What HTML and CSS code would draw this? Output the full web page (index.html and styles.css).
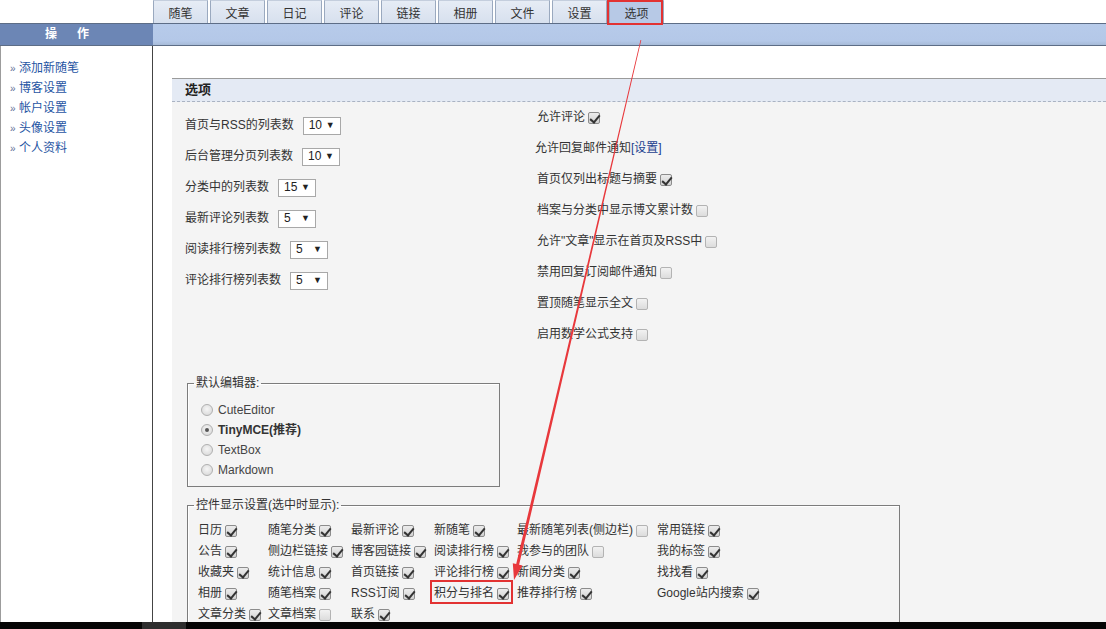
FILE: index.html
```html
<!DOCTYPE html>
<html lang="zh-CN">
<head>
<meta charset="utf-8">
<title>选项</title>
<link rel="stylesheet" href="styles.css">
</head>
<body>
<div class="page">
  <div class="top">
    <nav class="tabs">
      <span class="tab">随笔</span>
      <span class="tab">文章</span>
      <span class="tab">日记</span>
      <span class="tab">评论</span>
      <span class="tab">链接</span>
      <span class="tab">相册</span>
      <span class="tab">文件</span>
      <span class="tab">设置</span>
      <span class="tab active">选项</span>
    </nav>
  </div>
  <div class="bar">
    <div class="bar-left"><span>操</span><span>作</span></div>
    <div class="bar-right"></div>
  </div>
  <div class="body">
    <aside class="side">
      <ul class="side-list">
        <li><span class="raquo">»</span> <a>添加新随笔</a></li>
        <li><span class="raquo">»</span> <a>博客设置</a></li>
        <li><span class="raquo">»</span> <a>帐户设置</a></li>
        <li><span class="raquo">»</span> <a>头像设置</a></li>
        <li><span class="raquo">»</span> <a>个人资料</a></li>
      </ul>
    </aside>
    <main class="main">
      <section class="panel">
        <h2 class="panel-title">选项</h2>
        <div class="panel-body">
          <div class="cols">
            <div class="col-left">
              <div class="row"><span>首页与RSS的列表数</span><span class="sel"><span>10</span><span class="arr">▼</span></span></div>
              <div class="row"><span>后台管理分页列表数</span><span class="sel"><span>10</span><span class="arr">▼</span></span></div>
              <div class="row"><span>分类中的列表数</span><span class="sel"><span>15</span><span class="arr">▼</span></span></div>
              <div class="row"><span>最新评论列表数</span><span class="sel"><span>5</span><span class="arr">▼</span></span></div>
              <div class="row"><span>阅读排行榜列表数</span><span class="sel"><span>5</span><span class="arr">▼</span></span></div>
              <div class="row"><span>评论排行榜列表数</span><span class="sel"><span>5</span><span class="arr">▼</span></span></div>
            </div>
            <div class="col-right">
              <div class="rrow"><span>允许评论</span><span class="cb on"></span></div>
              <div class="rrow shift"><span>允许回复邮件通知<a class="link">[设置]</a></span></div>
              <div class="rrow"><span>首页仅列出标题与摘要</span><span class="cb on"></span></div>
              <div class="rrow"><span>档案与分类中显示博文累计数</span><span class="cb"></span></div>
              <div class="rrow"><span>允许"文章"显示在首页及RSS中</span><span class="cb"></span></div>
              <div class="rrow"><span>禁用回复订阅邮件通知</span><span class="cb"></span></div>
              <div class="rrow"><span>置顶随笔显示全文</span><span class="cb"></span></div>
              <div class="rrow"><span>启用数学公式支持</span><span class="cb"></span></div>
            </div>
          </div>

          <fieldset class="editor">
            <legend>默认编辑器:</legend>
            <div class="radio-row"><span class="rb"></span><span>CuteEditor</span></div>
            <div class="radio-row"><span class="rb on"></span><b>TinyMCE(推荐)</b></div>
            <div class="radio-row"><span class="rb"></span><span>TextBox</span></div>
            <div class="radio-row"><span class="rb"></span><span>Markdown</span></div>
          </fieldset>

          <fieldset class="widgets">
            <legend>控件显示设置(选中时显示):</legend>
            <div class="wgrid">
              <div class="w"><span>日历</span><span class="cb on"></span></div>
              <div class="w"><span>随笔分类</span><span class="cb on"></span></div>
              <div class="w"><span>最新评论</span><span class="cb on"></span></div>
              <div class="w"><span>新随笔</span><span class="cb on"></span></div>
              <div class="w"><span>最新随笔列表(侧边栏)</span><span class="cb"></span></div>
              <div class="w"><span>常用链接</span><span class="cb on"></span></div>

              <div class="w"><span>公告</span><span class="cb on"></span></div>
              <div class="w"><span>侧边栏链接</span><span class="cb on"></span></div>
              <div class="w"><span>博客园链接</span><span class="cb on"></span></div>
              <div class="w"><span>阅读排行榜</span><span class="cb on"></span></div>
              <div class="w"><span>我参与的团队</span><span class="cb"></span></div>
              <div class="w"><span>我的标签</span><span class="cb on"></span></div>

              <div class="w"><span>收藏夹</span><span class="cb on"></span></div>
              <div class="w"><span>统计信息</span><span class="cb on"></span></div>
              <div class="w"><span>首页链接</span><span class="cb on"></span></div>
              <div class="w"><span>评论排行榜</span><span class="cb on"></span></div>
              <div class="w"><span>新闻分类</span><span class="cb on"></span></div>
              <div class="w"><span>找找看</span><span class="cb on"></span></div>

              <div class="w"><span>相册</span><span class="cb on"></span></div>
              <div class="w"><span>随笔档案</span><span class="cb on"></span></div>
              <div class="w"><span>RSS订阅</span><span class="cb on"></span></div>
              <div class="w"><span>积分与排名</span><span class="cb on"></span></div>
              <div class="w"><span>推荐排行榜</span><span class="cb on"></span></div>
              <div class="w"><span>Google站内搜索</span><span class="cb on"></span></div>

              <div class="w"><span>文章分类</span><span class="cb on"></span></div>
              <div class="w"><span>文章档案</span><span class="cb"></span></div>
              <div class="w"><span>联系</span><span class="cb on"></span></div>
            </div>
          </fieldset>
        </div>
      </section>
    </main>
  </div>
  <div class="taskbar"><span class="task"></span></div>

  <svg class="annot" width="1106" height="629" viewBox="0 0 1106 629">
    <rect x="608" y="1" width="54" height="23" fill="none" stroke="#e23232" stroke-width="2"/>
    <rect x="431" y="581" width="81" height="22" fill="none" stroke="#e23232" stroke-width="2"/>
    <polygon fill="#e8383c" points="640.5,39.9 641.3,40.1 519.1,564.8 522.5,565.6 514,580 512.8,563.3 516.2,564.1"/>
  </svg>
</div>
</body>
</html>
```

FILE: styles.css
```css
* { box-sizing: border-box; }

html, body {
  margin: 0;
  padding: 0;
  background: #fff;
}

body {
  font: 12px/1.2 "Liberation Sans", "Noto Sans CJK SC", sans-serif;
  color: #333;
}

.page {
  position: relative;
  width: 1106px;
  height: 629px;
  display: flex;
  flex-direction: column;
  overflow: hidden;
}

/* tabs */
.top {
  height: 23px;
  flex: none;
}
.tabs {
  display: flex;
  gap: 2px;
  padding-left: 153px;
  height: 23px;
}
.tab {
  width: 55px;
  height: 23px;
  display: flex;
  align-items: center;
  justify-content: center;
  padding-top: 5px;
  background: linear-gradient(#e6ecf5, #d7e0ee);
  border: 1px solid #9aa9bf;
  border-top-color: #c4cedd;
  border-bottom: none;
  color: #333;
  font-size: 12px;
}
.tab.active {
  background: #b7c9e6;
}

/* header bar */
.bar {
  height: 23px;
  flex: none;
  display: flex;
  border-top: 1px solid #5d6d86;
  border-bottom: 1px solid #5d6d86;
}
.bar-left {
  width: 153px;
  background: #6c86b5;
  color: #fff;
  font-weight: bold;
  font-size: 12px;
  display: flex;
  align-items: center;
  gap: 20px;
  padding-left: 45px;
}
.bar-right {
  flex: 1;
  background: linear-gradient(#b7cbea 0%, #b4c8e8 80%, #a7bbd8 100%);
}

/* body */
.body {
  flex: 1;
  display: flex;
  min-height: 0;
}

.side {
  width: 153px;
  flex: none;
  border-left: 1px solid #9c9c9c;
  border-right: 1px solid #444;
  background: #fff;
  padding: 12px 0 0 9px;
}
.side-list {
  list-style: none;
  margin: 0;
  padding: 0;
}
.side-list li {
  height: 20px;
  line-height: 20px;
  white-space: nowrap;
}
.raquo {
  color: #5d6f95;
  font-size: 10px;
}
.side-list a {
  color: #1f55a3;
  text-decoration: none;
}

.main {
  flex: 1;
  display: flex;
  flex-direction: column;
  padding: 32px 0 0 19px;
  background: #fff;
  min-width: 0;
}

.panel {
  flex: 1;
  background: #f4f4f4;
  border-top: 1px solid #9b9b9b;
}
.panel-title {
  margin: 0;
  height: 23px;
  line-height: 22px;
  padding-left: 13px;
  background: #e4eaf4;
  border-bottom: 1px dashed #aab3c2;
  font-size: 13px;
  font-weight: bold;
  color: #222;
}
.panel-body {
  padding-left: 13px;
}

.cols {
  display: flex;
}
.col-left {
  width: 352px;
  padding-top: 8px;
}
.row {
  height: 31px;
  display: flex;
  align-items: center;
  gap: 9px;
}
.sel {
  display: inline-flex;
  align-items: center;
  justify-content: space-between;
  width: 38px;
  height: 18px;
  padding: 0 5px 0 5px;
  background: #fff;
  border: 1px solid #a8a8a8;
  font-size: 12px;
  color: #222;
}
.arr {
  font-size: 9px;
  color: #222;
}

.rrow {
  height: 31px;
  display: flex;
  align-items: center;
  gap: 3px;
}
.rrow.shift {
  margin-left: -2px;
}
.link {
  color: #1b3f8f;
}

/* checkbox */
.cb {
  position: relative;
  display: inline-block;
  width: 12px;
  height: 12px;
  border: 1px solid #b3b3b3;
  border-radius: 2px;
  background: linear-gradient(#f2f2f2, #dcdcdc);
  flex: none;
}
.cb.on {
  border-color: #8c8c8c;
  background: linear-gradient(#ececec, #d2d2d2);
}
.cb.on::after {
  content: "";
  position: absolute;
  left: 3px;
  top: 0px;
  width: 4px;
  height: 8px;
  border: solid #333;
  border-width: 0 2px 2px 0;
  transform: rotate(40deg);
}

/* fieldsets */
fieldset {
  margin: 0;
  border: 1px solid #7c7c7c;
  box-shadow: inset 1px 1px 0 #fff;
}
legend {
  padding: 0 2px;
  font-size: 12px;
  line-height: 14px;
  color: #333;
}

.editor {
  width: 313px;
  margin: 26px 0 0 2px;
  padding: 10px 0 6px 13px;
}
.editor legend {
  margin-left: -7px;
}
.radio-row {
  height: 20px;
  display: flex;
  align-items: center;
  gap: 5px;
  color: #444;
}
.radio-row b {
  color: #333;
}
.rb {
  position: relative;
  width: 12px;
  height: 12px;
  border-radius: 50%;
  border: 1px solid #b0b0b0;
  background: radial-gradient(circle at 50% 40%, #f6f6f6, #d4d4d4);
  flex: none;
}
.rb.on::after {
  content: "";
  position: absolute;
  left: 3px;
  top: 3px;
  width: 4px;
  height: 4px;
  border-radius: 50%;
  background: #555;
}

.widgets {
  width: 713px;
  margin: 11px 0 0 2px;
  padding: 8px 0 6px 10px;
}
.widgets legend {
  margin-left: -4px;
}
.wgrid {
  display: grid;
  grid-template-columns: 70px 83px 83px 83px 140px auto;
  grid-auto-rows: 21px;
}
.w {
  display: flex;
  align-items: center;
  gap: 3px;
  white-space: nowrap;
}

/* bottom taskbar strip */
.taskbar {
  height: 7px;
  flex: none;
  background: #050505;
  padding-left: 142px;
}
.task {
  display: block;
  width: 44px;
  height: 7px;
  background: #2e2e2e;
}

.annot {
  position: absolute;
  left: 0;
  top: 0;
  pointer-events: none;
}
```
